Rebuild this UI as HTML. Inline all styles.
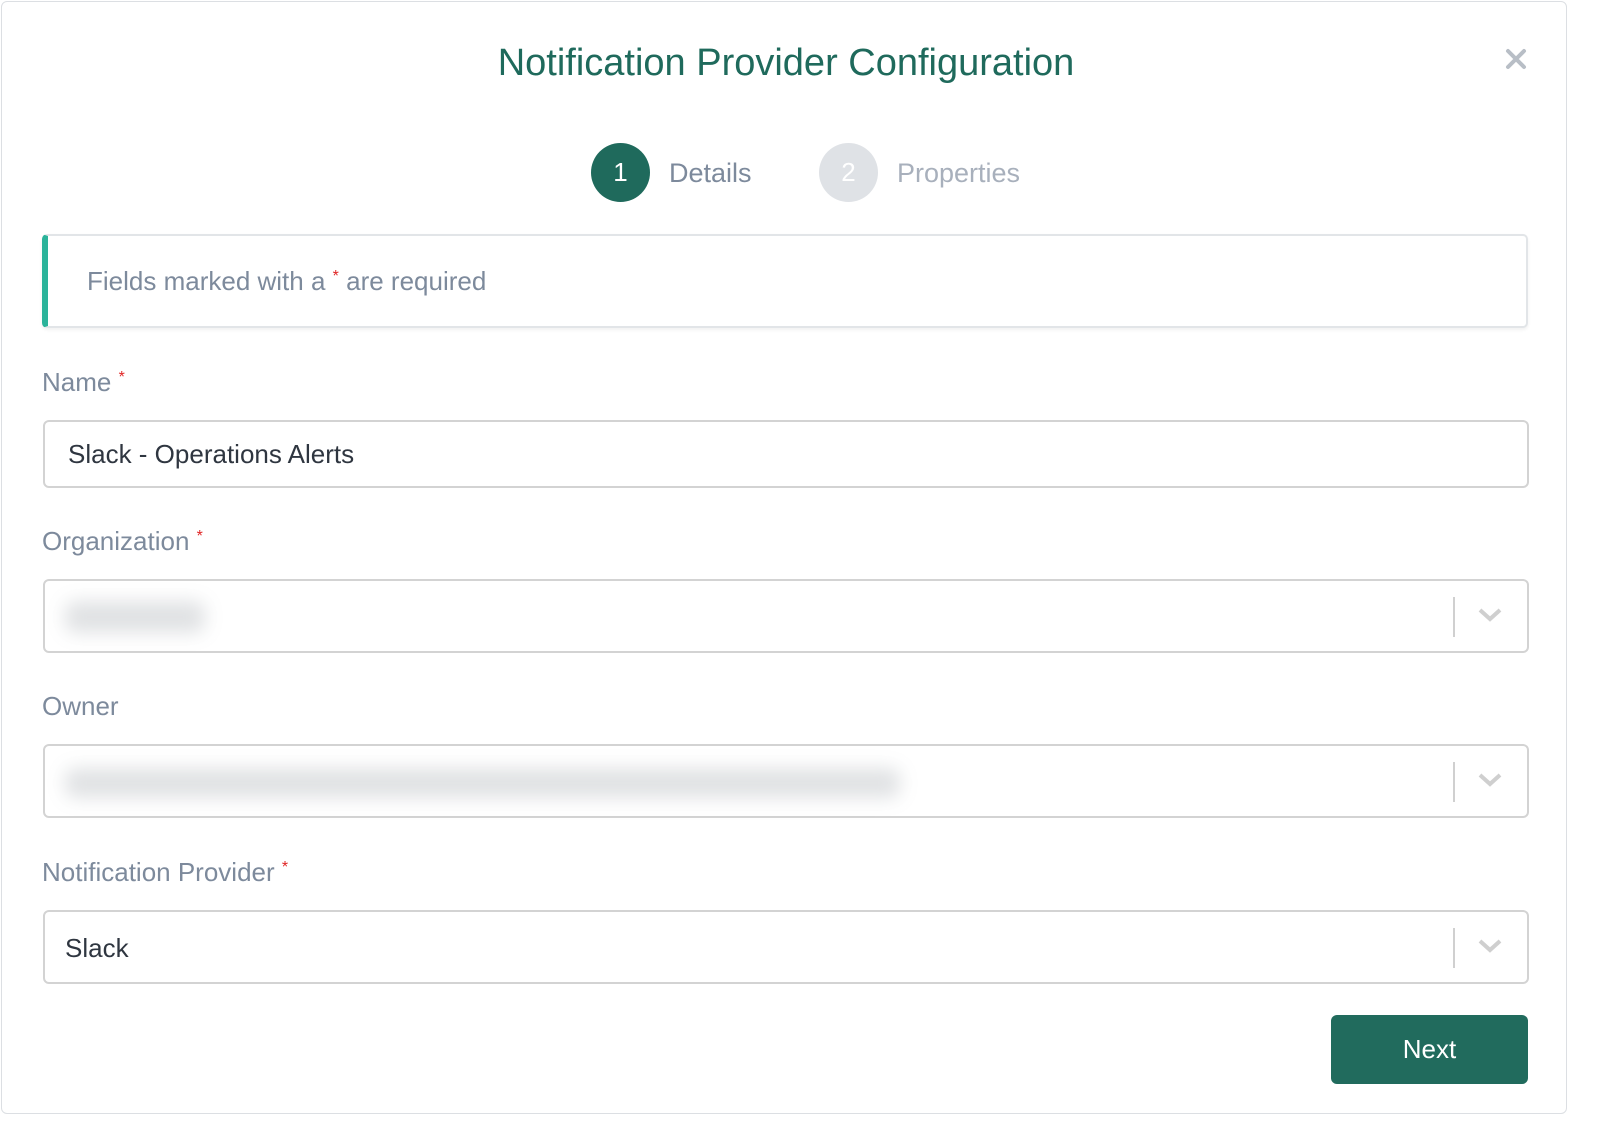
<!DOCTYPE html>
<html><head><style>
*{box-sizing:border-box;margin:0;padding:0}
body{width:1600px;height:1138px;background:#fff;font-family:"Liberation Sans",sans-serif;position:relative;overflow:hidden}
.modal{position:absolute;left:1px;top:1px;width:1566px;height:1113px;border:1px solid #dcdfe3;border-radius:6px;background:#fff}
.a{position:absolute}
.title{left:0;width:1568px;top:40px;text-align:center;font-size:38px;color:#1f6a5c}
.lbl{font-size:26px;color:#7d8a9c}
.req{color:#e02424;font-size:16px;vertical-align:top;position:relative;top:2px}
.inp{left:41px;width:1486px;border:2px solid #d3d3d3;border-radius:6px;background:#fff}
.sep{position:absolute;right:72px;top:16px;width:2px;height:40px;background:#d0d0d0}
.chev{position:absolute;right:24px;top:26px}
.blur{position:absolute;background:#9aa0a6;filter:blur(9px);opacity:.3;border-radius:10px}
</style></head><body>
<div class="modal">
<div class="a title">Notification Provider Configuration</div>
<svg class="a" style="left:1503px;top:46px" width="22" height="22" viewBox="0 0 22 22"><path d="M3 3L19 19M19 3L3 19" stroke="#b8bec6" stroke-width="4" stroke-linecap="round"/></svg>
<div class="a" style="left:589px;top:141px;width:59px;height:59px;border-radius:50%;background:#1f6a5c;color:#fff;font-size:26px;text-align:center;line-height:59px">1</div>
<div class="a" style="left:667px;top:156px;font-size:27px;color:#7d8a9c">Details</div>
<div class="a" style="left:817px;top:141px;width:59px;height:59px;border-radius:50%;background:#dfe2e6;color:#fff;font-size:26px;text-align:center;line-height:59px">2</div>
<div class="a" style="left:895px;top:156px;font-size:27px;color:#a8b0bc">Properties</div>
<div class="a" style="left:40px;top:232px;width:1486px;height:94px;border:2px solid #e2e5e8;border-left:6px solid #2bb39a;border-radius:5px;box-shadow:0 2px 3px rgba(0,0,0,.06)"></div>
<div class="a lbl" style="left:85px;top:264px">Fields marked with a <span class="req">*</span> are required</div>
<div class="a lbl" style="left:40px;top:365px">Name <span class="req">*</span></div>
<div class="a inp" style="top:418px;height:68px"></div>
<div class="a" style="left:66px;top:437px;font-size:26px;color:#2f3640">Slack - Operations Alerts</div>
<div class="a lbl" style="left:40px;top:524px">Organization <span class="req">*</span></div>
<div class="a inp" style="top:577px;height:74px"><div class="blur" style="left:20px;top:20px;width:140px;height:32px"></div><div class="sep"></div><svg class="chev" width="26" height="16"><path d="M3 3L13 12L23 3" stroke="#cfcfcf" stroke-width="4" fill="none"/></svg></div>
<div class="a lbl" style="left:40px;top:689px">Owner</div>
<div class="a inp" style="top:742px;height:74px"><div class="blur" style="left:20px;top:22px;width:835px;height:30px"></div><div class="sep"></div><svg class="chev" width="26" height="16"><path d="M3 3L13 12L23 3" stroke="#cfcfcf" stroke-width="4" fill="none"/></svg></div>
<div class="a lbl" style="left:40px;top:855px">Notification Provider <span class="req">*</span></div>
<div class="a inp" style="top:908px;height:74px"><div style="position:absolute;left:20px;top:21px;font-size:26px;color:#2f3640">Slack</div><div class="sep"></div><svg class="chev" width="26" height="16"><path d="M3 3L13 12L23 3" stroke="#cfcfcf" stroke-width="4" fill="none"/></svg></div>
<div class="a" style="left:1329px;top:1013px;width:197px;height:69px;background:#216b5d;border-radius:6px;color:#fff;font-size:26px;text-align:center;line-height:69px">Next</div>
</div>
</body></html>
